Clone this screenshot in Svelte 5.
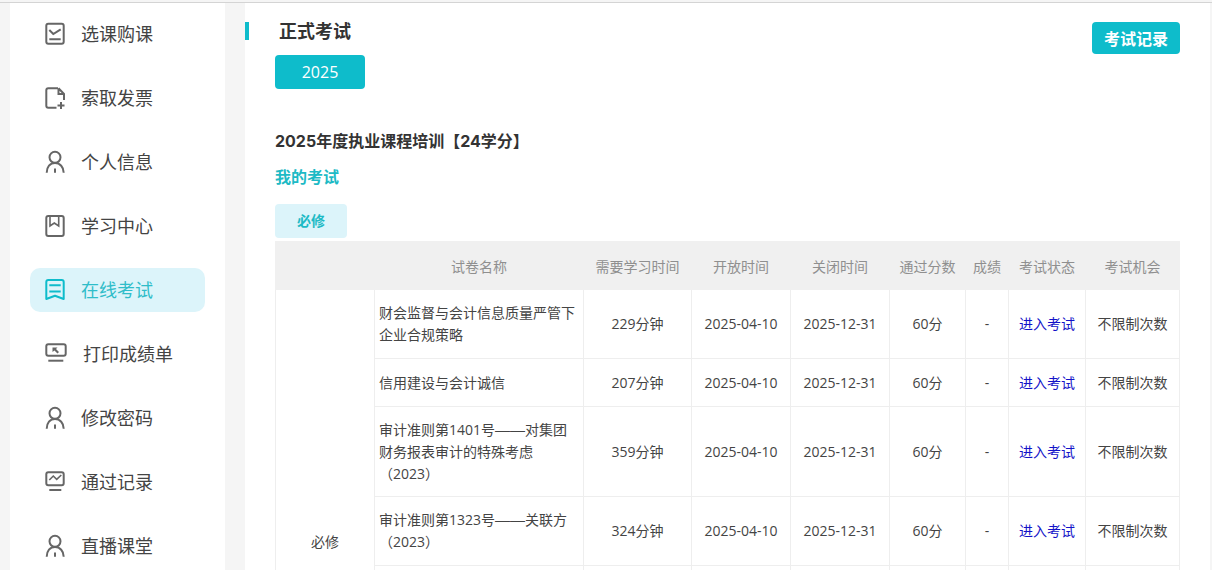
<script>
  const menu = [
    { label: '选课购课', icon: 'check' },
    { label: '索取发票', icon: 'file' },
    { label: '个人信息', icon: 'user' },
    { label: '学习中心', icon: 'book' },
    { label: '在线考试', icon: 'exam', active: true },
    { label: '打印成绩单', icon: 'print', wide: true },
    { label: '修改密码', icon: 'user' },
    { label: '通过记录', icon: 'chart' },
    { label: '直播课堂', icon: 'user' }
  ];

  const rows = [
    { name: ['财会监督与会计信息质量严管下', '企业合规策略'], mins: 229, h: 69 },
    { name: ['信用建设与会计诚信'], mins: 207, h: 48 },
    { name: ['审计准则第1401号——对集团', '财务报表审计的特殊考虑', '（2023）'], mins: 359, h: 90 },
    { name: ['审计准则第1323号——关联方', '（2023）'], mins: 324, h: 69 }
  ];
</script>

<div class="page">
  <aside class="side">
    {#each menu as item}
      <div class="item" class:active={item.active}>
        <svg class="icon" class:print={item.wide} viewBox="0 0 {item.wide ? 24 : 22} 24" fill="none" stroke="currentColor" stroke-width="2">
          {#if item.icon === 'check'}
            <rect x="2.300" y="1.700" width="17.400" height="20" rx="2" />
            <path d="M5.300 8l4 4 7.400-4.700M5.300 17.300h11.400" />
          {:else if item.icon === 'file'}
            <path d="M14 2.300H4.300a2 2 0 0 0-2 2v15.400a2 2 0 0 0 2 2h8.200M14.500 2.300L20 8v6M14.500 2.300V8H20" />
            <path d="M13.500 19.500h7M17 16v7" />
          {:else if item.icon === 'user'}
            <circle cx="11" cy="7.300" r="5.500" />
            <path d="M2.700 22.700C2.700 17 6 13 11 13s8.700 4 8.700 9.700M11 18.500v4.200" />
          {:else if item.icon === 'book'}
            <rect x="2.300" y="2" width="17.400" height="20" rx="2" />
            <path d="M6 2v10l4.300-3 4.400 3V2" stroke-width="1.600" />
          {:else if item.icon === 'exam'}
            <path d="M2.300 21V4a2 2 0 0 1 2-2h13.400a2 2 0 0 1 2 2v17L11 17.700z" stroke-linejoin="round" />
            <path d="M5.300 7.300h11.400M5.300 13.500h11.400" />
          {:else if item.icon === 'print'}
            <rect x="2.300" y="2.300" width="19.400" height="11.400" rx="2" />
            <path d="M4.300 18.700h15" />
            <path d="M8.500 5.500h5l-1.500 1.500 3 3-1.500 1.500-3-3-2 1.500z" fill="currentColor" stroke="none" />
          {:else if item.icon === 'chart'}
            <rect x="2.300" y="2.300" width="17.400" height="13" rx="2" />
            <path d="M5.300 20h12" />
            <path d="M5.300 10l4-4 3.400 3.300L17.300 5" stroke-width="1.600" />
          {/if}
        </svg>
        <span>{item.label}</span>
      </div>
    {/each}
  </aside>

  <main class="main">
    <div class="head">
      <div>
        <h1 class="title">正式考试</h1>
        <button class="year">2025</button>
      </div>
      <button class="record">考试记录</button>
    </div>

    <h2 class="course">2025年度执业课程培训【24学分】</h2>
    <h2 class="mine">我的考试</h2>
    <div class="tab">必修</div>

    <table>
      <colgroup>
        <col style="width:99px" /><col style="width:209px" /><col style="width:108px" /><col style="width:99px" />
        <col style="width:99px" /><col style="width:76px" /><col style="width:43px" /><col style="width:77px" /><col style="width:94px" />
      </colgroup>
      <thead>
        <tr>
          <th></th><th>试卷名称</th><th>需要学习时间</th><th>开放时间</th><th>关闭时间</th>
          <th>通过分数</th><th>成绩</th><th>考试状态</th><th>考试机会</th>
        </tr>
      </thead>
      <tbody>
        {#each rows as row, i}
          <tr style="height:{row.h}px">
            {#if i === 0}
              <td rowspan={rows.length + 1}>必修</td>
            {/if}
            <td class="name">
              {#each row.name as line}
                <div>{#each line.split('——') as part, j}{#if j}<span class="dash">——</span>{/if}{part}{/each}</div>
              {/each}
            </td>
            <td>{row.mins}分钟</td>
            <td>2025-04-10</td>
            <td>2025-12-31</td>
            <td>60分</td>
            <td>-</td>
            <td><span class="enter">进入考试</span></td>
            <td>不限制次数</td>
          </tr>
        {/each}
        <tr class="more">
          <td></td><td></td><td></td><td></td><td></td><td></td><td></td><td></td>
        </tr>
      </tbody>
    </table>
  </main>
</div>

<style>
  :global(body) {
    margin: 0;
    overflow: hidden;
    background: #f5f5f5;
    font-family: "Open Sans", "Noto Sans CJK SC", sans-serif;
  }

  .page {
    display: flex;
    align-items: flex-start;
    height: 567px;
    overflow: hidden;
    border-top: 1px solid #d4d4d4;
    margin-top: 2px;
    padding-left: 10px;
    gap: 20px;
  }

  .side {
    width: 175px;
    height: 567px;
    flex: none;
    background: #fff;
    padding: 9px 20px 0;
  }

  .item {
    display: flex;
    align-items: center;
    height: 44px;
    margin-bottom: 20px;
    border-radius: 10px;
    color: #666;
    font-size: 18px;
    padding-left: 14px;
    gap: 15px;
  }

  .item span {
    color: #444;
    margin-top: -2px;
  }

  .item.active {
    background: #dcf4fa;
    color: #0ebccb;
  }

  .item.active span {
    color: #2fbdc9;
  }

  .icon {
    width: 22px;
    height: 24px;
    flex: none;
  }

  .icon.print {
    width: 24px;
  }

  .main {
    flex: 1;
    height: 567px;
    background: #fff;
    margin-right: 2px;
    padding: 0 30px;
    position: relative;
  }

  .main::before {
    content: '';
    position: absolute;
    left: 0;
    top: 19px;
    width: 4px;
    height: 18px;
    background: #0ebccb;
  }

  .head {
    display: flex;
    justify-content: space-between;
    align-items: flex-start;
  }

  .title {
    margin: 16px 0 11px 4px;
    font-size: 18px;
    line-height: 25px;
    color: #333;
    font-weight: 700;
  }

  .year {
    display: block;
    width: 90px;
    height: 34px;
    border: 0;
    border-radius: 4px;
    background: #0ebccb;
    color: #fff;
    font-family: inherit;
    font-size: 16px;
  }

  .record {
    margin-top: 19px;
    width: 88px;
    height: 32px;
    border: 0;
    border-radius: 4px;
    background: #0ebccb;
    color: #fff;
    font-family: inherit;
    font-size: 16px;
    font-weight: 700;
  }

  .course {
    margin: 40px 0 0;
    font-family: Inter, "Noto Sans CJK SC", sans-serif;
    font-size: 16px;
    line-height: 24px;
    color: #333;
    font-weight: 700;
  }

  .mine {
    margin: 12px 0 0;
    font-size: 16px;
    line-height: 24px;
    color: #1dbac5;
    font-weight: 700;
  }

  .tab {
    margin-top: 15px;
    width: 72px;
    height: 34px;
    line-height: 34px;
    border-radius: 4px;
    background: #dcf4fa;
    color: #1dbac5;
    font-size: 14px;
    font-weight: 700;
    text-align: center;
  }

  table {
    margin-top: 3px;
    width: 904px;
    table-layout: fixed;
    border-collapse: collapse;
    font-size: 14px;
    color: #444;
  }

  th {
    height: 47px;
    padding: 0;
    border: 1px solid #f0f0f0;
    background: #f0f0f0;
    color: #8f8f8f;
    font-weight: 400;
    font-size: 14px;
  }

  td {
    padding: 0;
    border: 1px solid #eee;
    text-align: center;
    line-height: 22px;
  }

  td.name {
    text-align: left;
    padding: 0 4px;
  }

  .dash {
    font-family: "Liberation Sans", sans-serif;
    font-size: 15px;
  }

  .more {
    height: 229px;
  }

  .enter {
    color: #1212c8;
  }
</style>
